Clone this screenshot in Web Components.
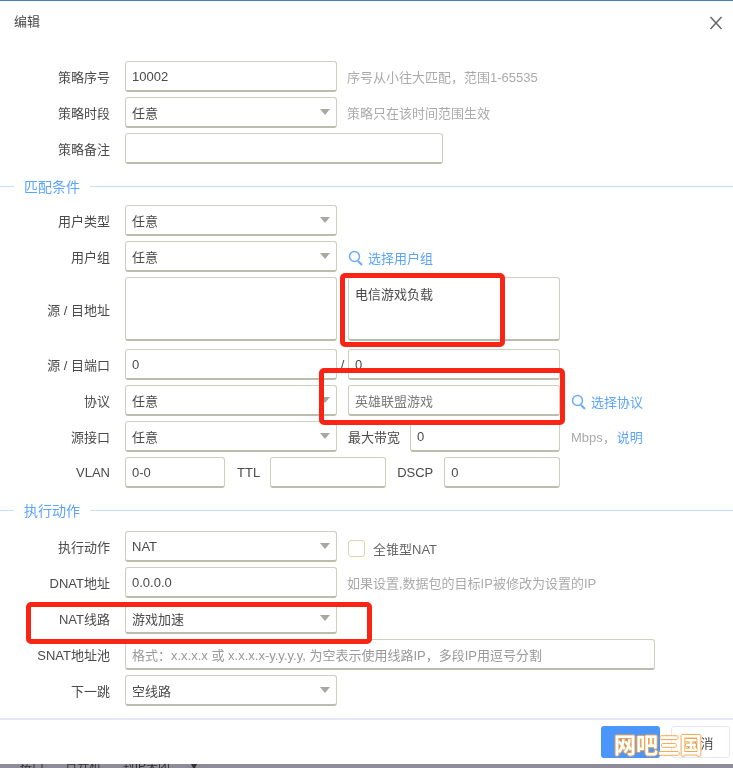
<!DOCTYPE html>
<html lang="zh">
<head>
<meta charset="utf-8">
<title>编辑</title>
<style>
	html, body {
		margin: 0;
		padding: 0;
		height: 768px;
		overflow: hidden;
		background: #fff;
		font-family: "Liberation Sans", "Noto Sans CJK SC", sans-serif;
		font-size: 13px;
		color: #4a4a4a;
	}
</style>
</head>
<body>
<edit-dialog>
	<form-row label="策略序号">
		<text-box value="10002"></text-box>
		<form-hint>序号从小往大匹配，范围1-65535</form-hint>
	</form-row>
	<form-row label="策略时段">
		<select-box value="任意"></select-box>
		<form-hint>策略只在该时间范围生效</form-hint>
	</form-row>
	<form-row label="策略备注">
		<text-box width="318"></text-box>
	</form-row>

	<form-section title="匹配条件"></form-section>

	<form-row label="用户类型"><select-box value="任意"></select-box></form-row>
	<form-row label="用户组">
		<select-box value="任意"></select-box>
		<search-link>选择用户组</search-link>
	</form-row>
	<form-row label="源 / 目地址" height="64" after="8">
		<text-box tall></text-box>
		<field-sep></field-sep>
		<text-box tall value="电信游戏负载"></text-box>
	</form-row>
	<form-row label="源 / 目端口">
		<text-box value="0"></text-box>
		<field-sep>/</field-sep>
		<text-box value="0"></text-box>
	</form-row>
	<form-row label="协议">
		<select-box value="任意"></select-box>
		<field-sep></field-sep>
		<text-box style="--value-color: #7a7a7a" value="英雄联盟游戏"></text-box>
		<search-link>选择协议</search-link>
	</form-row>
	<form-row label="源接口">
		<select-box value="任意"></select-box>
		<field-sep></field-sep>
		<inline-label gap="10">最大带宽</inline-label>
		<text-box width="150" value="0"></text-box>
		<form-hint gap="11">Mbps，</form-hint>
		<a-link>说明</a-link>
	</form-row>
	<form-row label="VLAN">
		<text-box width="100" value="0-0"></text-box>
		<inline-label lead="12" gap="10">TTL</inline-label>
		<text-box width="116"></text-box>
		<inline-label lead="11" gap="11">DSCP</inline-label>
		<text-box width="116" value="0"></text-box>
	</form-row>

	<form-section title="执行动作" after="11"></form-section>

	<form-row label="执行动作">
		<select-box value="NAT"></select-box>
		<check-box>全锥型NAT</check-box>
	</form-row>
	<form-row label="DNAT地址">
		<text-box value="0.0.0.0"></text-box>
		<form-hint>如果设置,数据包的目标IP被修改为设置的IP</form-hint>
	</form-row>
	<form-row label="NAT线路"><select-box value="游戏加速"></select-box></form-row>
	<form-row label="SNAT地址池">
		<text-box width="530" placeholder="格式：x.x.x.x 或 x.x.x.x-y.y.y.y, 为空表示使用线路IP，多段IP用逗号分割"></text-box>
	</form-row>
	<form-row label="下一跳"><select-box value="空线路"></select-box></form-row>

	<red-mark slot="over" box="340,273,165,74"></red-mark>
	<red-mark slot="over" box="319,368,246,57"></red-mark>
	<red-mark slot="over" box="26,602,346,42"></red-mark>
</edit-dialog>

<script>
const fieldStyles = `
	* { box-sizing: border-box; }
	.box {
		display: flex;
		align-items: center;
		width: 100%;
		height: 100%;
		padding: 0 6px;
		background: #fff;
		border: 1px solid #cfcfc0;
		border-bottom: 2px solid #bdbdae;
		border-radius: 3px;
		color: var(--value-color, #4a4a4a);
		font-size: 13px;
		white-space: nowrap;
		overflow: hidden;
	}
`;

class EditDialog extends HTMLElement {
	constructor() {
		super();
		this.attachShadow({ mode: 'open' });
		this.shadowRoot.innerHTML = `
		<style>
			:host {
				display: flex;
				flex-direction: column;
				position: relative;
				width: 733px;
				height: 768px;
				overflow: hidden;
				background: #fff;
				border-top: 1px solid #4a7fbb;
				box-sizing: border-box;
				filter: blur(0.5px);
			}
			header {
				display: flex;
				justify-content: space-between;
				height: 60px;
				padding: 10px 10px 0 14px;
				box-sizing: border-box;
				font-size: 13px;
				color: #4a4a4a;
			}
			header svg { margin-top: 5px; }
			main { flex: 1; display: flex; flex-direction: column; }
			footer {
				display: flex;
				justify-content: flex-end;
				gap: 11px;
				height: 46px;
				padding: 6px 3px 0 0;
				box-sizing: border-box;
				border-top: 2px solid #e6e6fa;
			}
			button {
				height: 32px;
				font: inherit;
				font-size: 13px;
				border-radius: 3px;
			}
			.ok { width: 59px; background: #4a96fb; border: 0; color: #fff; }
			.cancel { width: 59px; background: #fff; border: 1px solid #e6e6fa; color: #4a4a4a; }
			.strip {
				height: 4px;
				line-height: 4px;
				padding-left: 20px;
				background: #8f8c99;
				color: #333;
				font-size: 12px;
				word-spacing: 18px;
				overflow: hidden;
			}
			.mark {
				position: absolute;
				left: 614px;
				top: 726px;
				font: bold 22px "Noto Sans CJK SC", sans-serif;
				line-height: 32px;
				color: #fff;
				white-space: nowrap;
				text-shadow: 1px 0 1px #f0a850, -1px 0 1px #f0a850, 0 1px 1px #f0a850, 0 -1px 1px #f0a850;
			}
		</style>
		<header>
			<span>编辑</span>
			<svg width="14" height="14" viewBox="0 0 14 14"><path d="M1.5 1 12.5 13M12.5 1 1.5 13" stroke="#666" stroke-width="1.5" fill="none"/></svg>
		</header>
		<main><slot></slot></main>
		<footer>
			<button class="ok"></button>
			<button class="cancel">取消</button>
		</footer>
		<div class="strip">接口 日开机 封IP关闭 ▾</div>
		<span class="mark">网吧三国</span>
		<slot name="over"></slot>
		`;
	}
}
customElements.define('edit-dialog', EditDialog);

class FormRow extends HTMLElement {
	constructor() {
		super();
		this.attachShadow({ mode: 'open' });
	}

	connectedCallback() {
		const height = this.getAttribute('height') || 31;
		const after = this.getAttribute('after') || 5;
		this.shadowRoot.innerHTML = `
		<style>
			:host {
				display: flex;
				align-items: center;
				height: ${height}px;
				margin-bottom: ${after}px;
			}
			label {
				flex: none;
				width: 110px;
				margin-right: 15px;
				text-align: right;
				font-size: 13px;
				color: #4a4a4a;
				white-space: nowrap;
			}
		</style>
		<label>${this.getAttribute('label')}</label>
		<slot></slot>
		`;
	}
}
customElements.define('form-row', FormRow);

class FormSection extends HTMLElement {
	constructor() {
		super();
		this.attachShadow({ mode: 'open' });
	}

	connectedCallback() {
		const after = this.getAttribute('after') || 9;
		this.shadowRoot.innerHTML = `
		<style>
			:host {
				display: flex;
				align-items: center;
				gap: 10px;
				height: 20px;
				margin: 7px 0 ${after}px;
				color: #5ba4fb;
				font-size: 14px;
			}
			i { height: 1px; background: #c5e0fb; }
			i:first-of-type { width: 14px; flex: none; }
			i:last-of-type { flex: 1; }
		</style>
		<i></i><span>${this.getAttribute('title')}</span><i></i>
		`;
	}
}
customElements.define('form-section', FormSection);

class TextBox extends HTMLElement {
	constructor() {
		super();
		this.attachShadow({ mode: 'open' });
	}

	connectedCallback() {
		const width = this.getAttribute('width') || 212;
		const value = this.getAttribute('value') || '';
		const placeholder = this.getAttribute('placeholder') || '';
		const tall = this.hasAttribute('tall');
		this.shadowRoot.innerHTML = `
		<style>
			${fieldStyles}
			:host {
				display: block;
				flex: none;
				width: ${width}px;
				height: ${tall ? 64 : 31}px;
			}
			.box { ${tall ? 'align-items: flex-start; padding-top: 6px;' : ''} }
			.ph { color: #999; }
		</style>
		<div class="box">${value}<span class="ph">${placeholder}</span></div>
		`;
	}
}
customElements.define('text-box', TextBox);

class SelectBox extends HTMLElement {
	constructor() {
		super();
		this.attachShadow({ mode: 'open' });
	}

	connectedCallback() {
		this.shadowRoot.innerHTML = `
		<style>
			${fieldStyles}
			:host { display: block; flex: none; width: 212px; height: 31px; }
			.box { justify-content: space-between; }
			i {
				width: 0;
				height: 0;
				border: 5px solid transparent;
				border-top: 6px solid #a8a8a0;
				border-bottom: 0;
			}
		</style>
		<div class="box"><span>${this.getAttribute('value')}</span><i></i></div>
		`;
	}
}
customElements.define('select-box', SelectBox);

class FormHint extends HTMLElement {
	constructor() {
		super();
		this.attachShadow({ mode: 'open' });
		this.shadowRoot.innerHTML = `
		<style>
			:host { display: block; color: #aaa; font-size: 13px; white-space: nowrap; }
		</style>
		<slot></slot>
		`;
	}

	connectedCallback() {
		this.style.marginLeft = (this.getAttribute('gap') || 10) + 'px';
	}
}
customElements.define('form-hint', FormHint);

class FieldSep extends HTMLElement {
	constructor() {
		super();
		this.attachShadow({ mode: 'open' });
		this.shadowRoot.innerHTML = `
		<style>
			:host { display: block; flex: none; width: 11px; text-align: center; color: #4a4a4a; font-size: 13px; }
		</style>
		<slot></slot>
		`;
	}
}
customElements.define('field-sep', FieldSep);

class InlineLabel extends HTMLElement {
	constructor() {
		super();
		this.attachShadow({ mode: 'open' });
		this.shadowRoot.innerHTML = `
		<style>
			:host { display: block; flex: none; color: #4a4a4a; font-size: 13px; white-space: nowrap; }
		</style>
		<slot></slot>
		`;
	}

	connectedCallback() {
		this.style.marginLeft = (this.getAttribute('lead') || 0) + 'px';
		this.style.marginRight = (this.getAttribute('gap') || 0) + 'px';
	}
}
customElements.define('inline-label', InlineLabel);

class SearchLink extends HTMLElement {
	constructor() {
		super();
		this.attachShadow({ mode: 'open' });
		this.shadowRoot.innerHTML = `
		<style>
			:host {
				display: flex;
				align-items: center;
				gap: 5px;
				margin-left: 11px;
				padding-top: 2px;
				color: #5ba4fb;
				font-size: 13px;
				white-space: nowrap;
			}
		</style>
		<svg width="15" height="16" viewBox="0 0 15 16" fill="none" stroke="#6aaefb">
			<circle cx="6.5" cy="6.5" r="5" stroke-width="1.5"/>
			<path d="M10 11 14 15" stroke-width="2.2"/>
		</svg>
		<slot></slot>
		`;
	}
}
customElements.define('search-link', SearchLink);

class ALink extends HTMLElement {
	constructor() {
		super();
		this.attachShadow({ mode: 'open' });
		this.shadowRoot.innerHTML = `
		<style>
			:host { display: block; margin-left: 1px; color: #5ba4fb; font-size: 13px; white-space: nowrap; }
		</style>
		<slot></slot>
		`;
	}
}
customElements.define('a-link', ALink);

class CheckBox extends HTMLElement {
	constructor() {
		super();
		this.attachShadow({ mode: 'open' });
		this.shadowRoot.innerHTML = `
		<style>
			:host {
				display: flex;
				align-items: center;
				gap: 8px;
				margin: 4px 0 0 11px;
				color: #666;
				font-size: 13px;
				white-space: nowrap;
			}
			i {
				width: 17px;
				height: 17px;
				box-sizing: border-box;
				border: 1px solid #d8d7b0;
				border-radius: 3px;
			}
		</style>
		<i></i><slot></slot>
		`;
	}
}
customElements.define('check-box', CheckBox);

// annotation drawn on top of the screenshot
class RedMark extends HTMLElement {
	constructor() {
		super();
		this.attachShadow({ mode: 'open' });
	}

	connectedCallback() {
		const [x, y, w, h] = this.getAttribute('box').split(',');
		this.shadowRoot.innerHTML = `
		<style>
			:host {
				position: absolute;
				left: ${x}px;
				top: ${y - 1}px;
				width: ${w}px;
				height: ${h}px;
				box-sizing: border-box;
				border: 5px solid #fa2414;
				border-radius: 5px;
			}
		</style>
		`;
	}
}
customElements.define('red-mark', RedMark);
</script>
</body>
</html>
